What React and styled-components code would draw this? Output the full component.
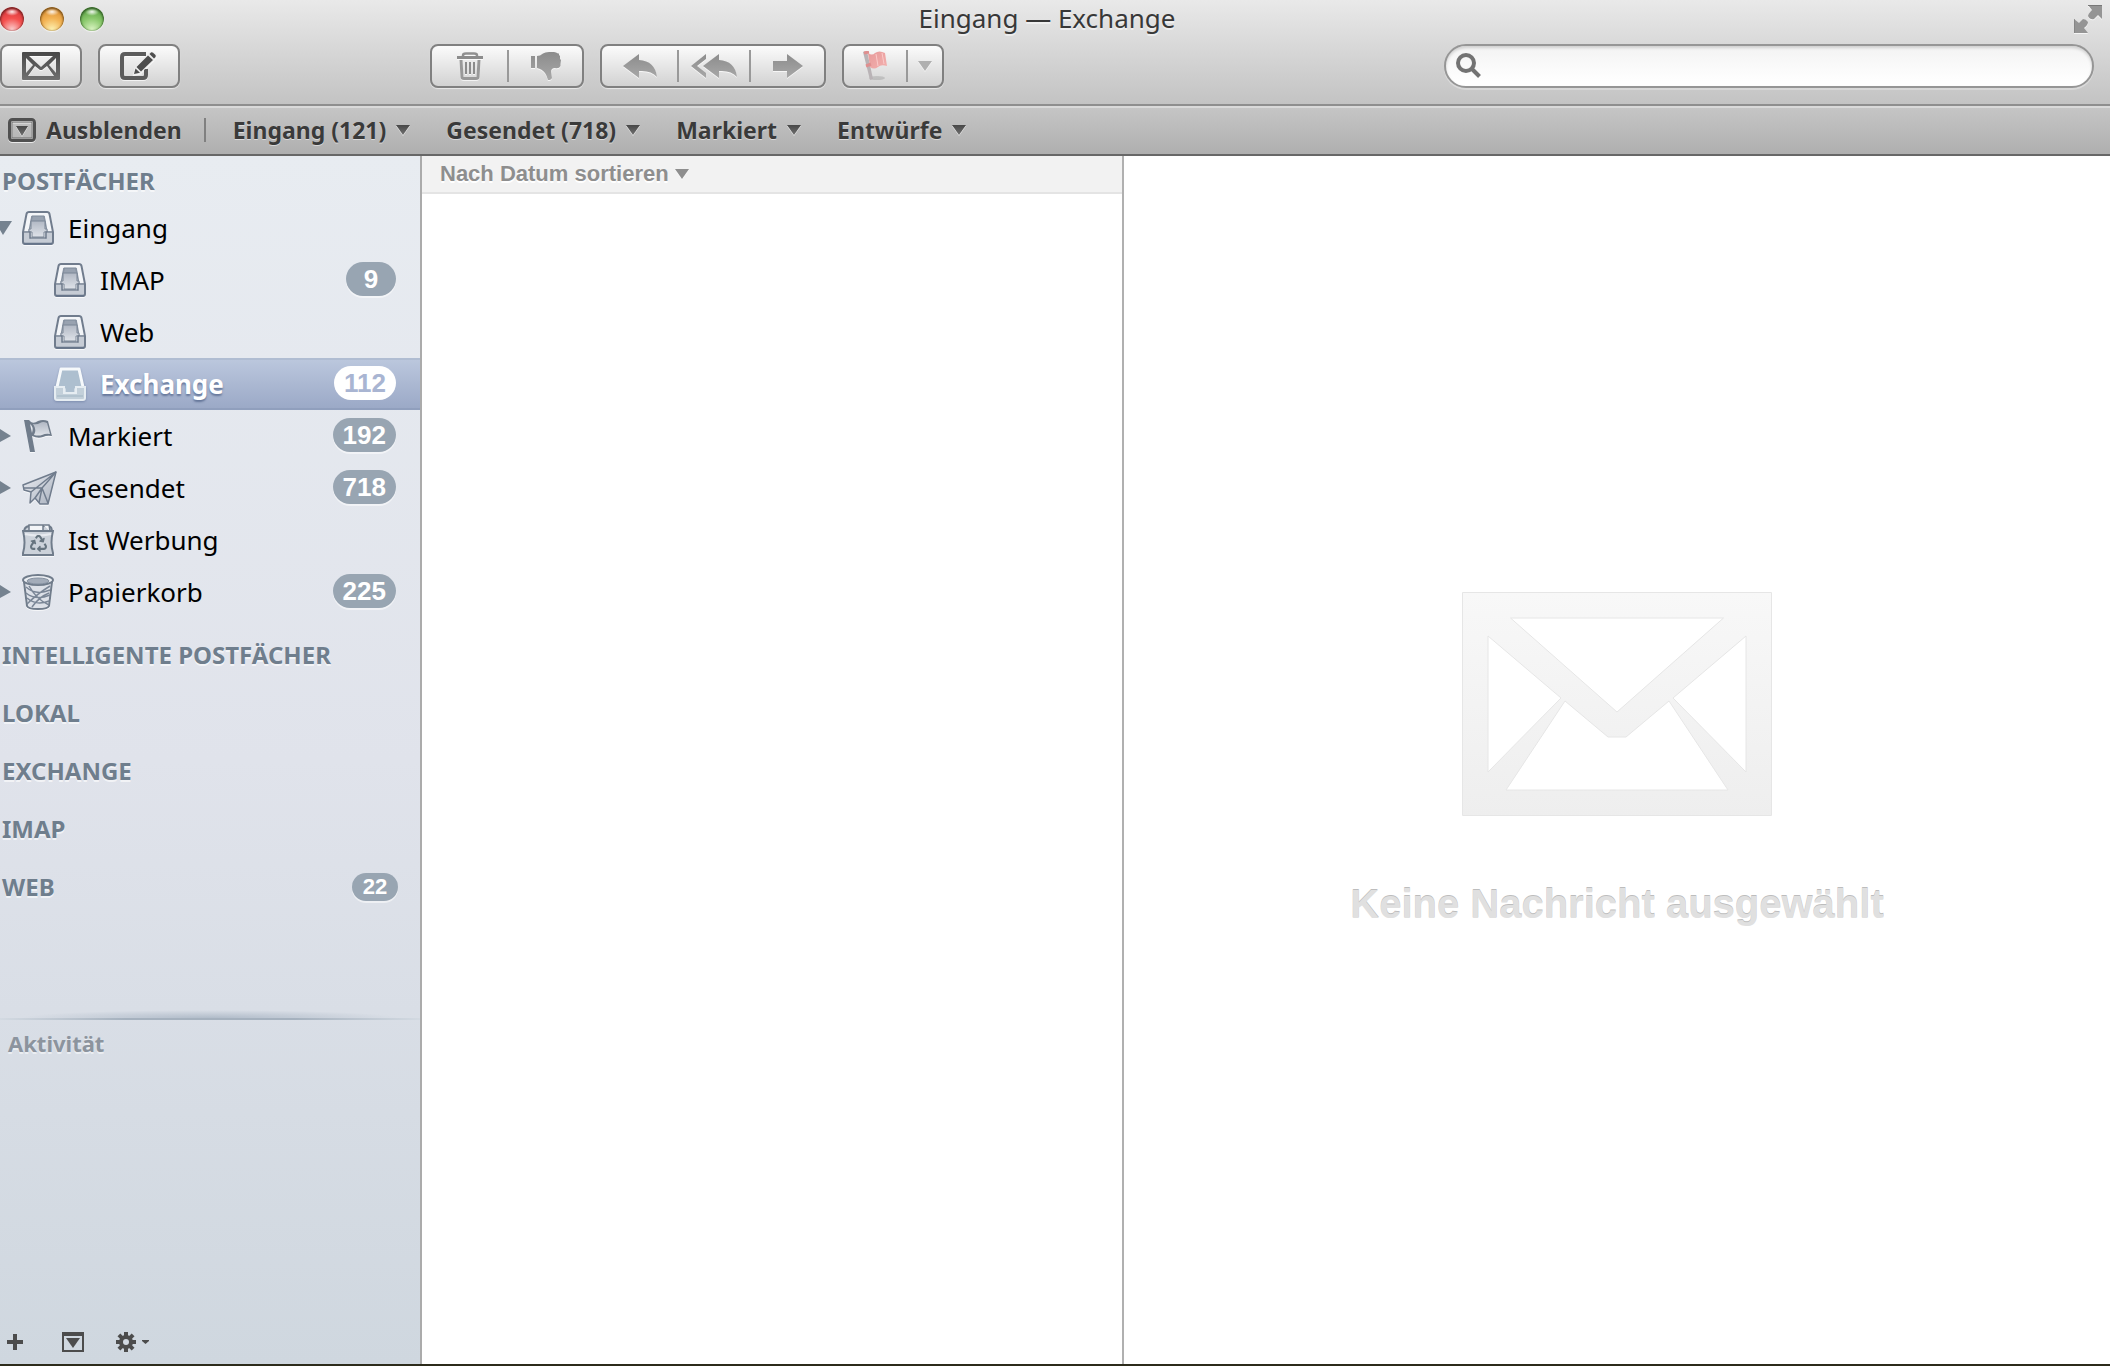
import React, { useState } from "react";
import styled, { createGlobalStyle } from "styled-components";
import { FaRecycle } from "react-icons/fa";

const mailboxes = [
  { id: "inbox", label: "Eingang", icon: "tray", arrow: "down" },
  { id: "inbox-imap", label: "IMAP", icon: "tray", count: 9, child: true },
  { id: "inbox-web", label: "Web", icon: "tray", child: true },
  { id: "inbox-exchange", label: "Exchange", icon: "tray", count: 112, child: true },
  { id: "flagged", label: "Markiert", icon: "flag", count: 192, arrow: "right" },
  { id: "sent", label: "Gesendet", icon: "plane", count: 718, arrow: "right" },
  { id: "junk", label: "Ist Werbung", icon: "junk" },
  { id: "trash", label: "Papierkorb", icon: "bin", count: 225, arrow: "right" },
];

const accounts = [
  { label: "INTELLIGENTE POSTFÄCHER" },
  { label: "LOKAL" },
  { label: "EXCHANGE" },
  { label: "IMAP" },
  { label: "WEB", count: 22 },
];

const favorites = ["Eingang (121)", "Gesendet (718)", "Markiert", "Entwürfe"];

// gradients shared by all icons
const Gradients = () => (
  <HiddenSvg aria-hidden="true">
    <defs>
      <linearGradient id="dark" x1="0" y1="0" x2="0" y2="1">
        <stop offset="0" stopColor="#484848" />
        <stop offset="1" stopColor="#707070" />
      </linearGradient>
      <linearGradient id="dim" x1="0" y1="0" x2="0" y2="1">
        <stop offset="0" stopColor="#8c8c8c" />
        <stop offset="1" stopColor="#a8a8a8" />
      </linearGradient>
      <linearGradient id="steel" x1="0" y1="0" x2="0" y2="1">
        <stop offset="0" stopColor="#b1b8c4" />
        <stop offset="1" stopColor="#dfe3e9" />
      </linearGradient>
      <linearGradient id="steelSide" x1="0" y1="0" x2="1" y2="1">
        <stop offset="0" stopColor="#eceef3" />
        <stop offset="1" stopColor="#a9b1be" />
      </linearGradient>
      <linearGradient id="pale" x1="0" y1="0" x2="0" y2="1">
        <stop offset="0" stopColor="#f8f8f8" />
        <stop offset="1" stopColor="#eeeeee" />
      </linearGradient>
      <linearGradient id="pink" x1="0" y1="0" x2="1" y2="1">
        <stop offset="0" stopColor="#e79a9a" />
        <stop offset="1" stopColor="#f3b0ae" />
      </linearGradient>
    </defs>
  </HiddenSvg>
);

const Triangle = ({ fill = "url(#dark)" }) => (
  <Engraved width="14" height="10" viewBox="0 0 14 10">
    <path d="M0 0H14L7 10Z" fill={fill} />
  </Engraved>
);

const EnvelopeIcon = () => (
  <Engraved width="38" height="28" viewBox="0 0 38 28">
    <path
      fill="url(#dark)"
      fillRule="evenodd"
      d="M1 0H37Q38 0 38 1V27Q38 28 37 28H1Q0 28 0 27V1Q0 0 1 0ZM7 4L19 15L31 4ZM4 6V21L11 13ZM34 6V21L27 13ZM13 14L6 24H32L25 14L20 18H18Z"
    />
  </Engraved>
);

const ComposeIcon = () => (
  <Engraved width="38" height="28" viewBox="0 0 38 28">
    <path d="M26 2H5Q2 2 2 5V23Q2 26 5 26H23Q26 26 26 23V17" fill="none" stroke="#5c5c5c" strokeWidth="4" />
    <path d="M14 22L15.500 16.500L20 20.700ZM16.500 15L28 3.500L33 8L21 19.500ZM29.500 2L31 .5Q32 0 33 .7L35.500 3Q36 4 35.500 5L34 6.500Z" fill="#4d4d4d" stroke="#ececec" strokeWidth="2" paintOrder="stroke" />
  </Engraved>
);

const TrashIcon = () => (
  <Engraved width="26" height="28" viewBox="0 0 26 28">
    <path d="M6 5V3.500Q6 1.500 9 1.500H17Q20 1.500 20 3.500V5" fill="none" stroke="#909090" strokeWidth="2.500" />
    <path d="M0 4H26V7H0Z" fill="#8c8c8c" />
    <path d="M4 8L5 25Q5 26.500 7 26.500H19Q21 26.500 21 25L22 8" fill="none" stroke="#999" strokeWidth="3" />
    <path d="M9 10V22M13 10V22M17 10V22" stroke="#8c8c8c" strokeWidth="2" />
  </Engraved>
);

const ThumbDownIcon = () => (
  <Engraved width="30" height="28" viewBox="0 0 30 28">
    <path d="M0 4H4V16H0ZM6 4Q9 4 12 1.500Q14 0 18 0H23Q25 .3 27 1.500H28V4L29 3V7L30 8L29.500 12L29.500 14Q28 17 24 16Q20 16 20 20L21 26Q20 28.500 17 28Q16 24 14 21Q11 17 6 16Z" fill="url(#dim)" />
  </Engraved>
);

const ReplyIcon = () => (
  <Engraved width="34" height="24" viewBox="0 0 34 24">
    <path d="M0 12L16 0V6Q32 7 34 23Q28 16 16 17V24Z" fill="url(#dim)" />
  </Engraved>
);

const ReplyAllIcon = () => (
  <Engraved width="46" height="24" viewBox="0 0 46 24">
    <path d="M15 0L0 12L15 24V19L6 12L15 5ZM12 12L28 0V6Q44 7 46 23Q40 16 28 17V24Z" fill="url(#dim)" />
  </Engraved>
);

const ForwardIcon = () => (
  <Engraved width="30" height="24" viewBox="0 0 30 24">
    <path d="M0 7H14V0L30 12L14 24V17H0Z" fill="url(#dim)" />
  </Engraved>
);

const RedFlagIcon = () => (
  <svg width="24" height="30" viewBox="0 0 24 30">
    <ellipse cx="14" cy="27" rx="8" ry="2" fill="#000" opacity=".12" />
    <path d="M0 1L4 0L10 28L7 29Z" fill="#b9b3b6" />
    <path d="M5 2Q9 5 12 2Q16 -1 22 2L24 15Q18 13 15 16Q11 19 7 16Z" fill="url(#pink)" />
    <path d="M1 2L6 1M3 15L8 13" stroke="#df8f8f" strokeWidth="3" />
    <path d="M13 3L15 15M19 2L21 13" stroke="#fbcaca" strokeWidth="1" />
  </svg>
);

const HideIcon = () => (
  <Engraved width="28" height="24" viewBox="0 0 28 24">
    <rect x="1.500" y="1.500" width="25" height="21" rx="3" fill="none" stroke="#505050" strokeWidth="3" />
    <rect x="4" y="4" width="20" height="16" fill="none" stroke="#6b6b6b" strokeWidth="1" />
    <path d="M8 8H20L14 18Z" fill="url(#dark)" />
  </Engraved>
);

const FullscreenIcon = () => (
  <Engraved width="28" height="28" viewBox="0 0 28 28">
    <path d="M14 0H28V14L24 10L20 14Q16 15 14 11Q14 9 18 5ZM0 14L5 18L9 14Q12 14 14 17Q14 20 10 23L14 28H0Z" fill="#959595" />
    <path d="M14 .5H28M0 14V28" stroke="#787878" strokeWidth="1" />
  </Engraved>
);

const SearchIcon = () => (
  <svg width="26" height="26" viewBox="0 0 26 26">
    <circle cx="10" cy="10" r="8" fill="none" stroke="#737373" strokeWidth="4" />
    <path d="M15 15L23.500 23.500" stroke="#737373" strokeWidth="4" />
  </svg>
);

const TrayIcon = ({ selected }) => {
  if (selected) {
    return (
      <Engraved width="32" height="34" viewBox="0 0 32 34" $soft>
        <path d="M7 2H25L29 20V22H22V27H10V22H3V20Z" fill="#adbfcf" stroke="#f6f9fb" strokeWidth="3" strokeLinejoin="round" />
        <path d="M1 20H10V26H22V20H31V31Q31 33 29 33H3Q1 33 1 31Z" fill="#c3d0da" stroke="#e6edf2" strokeWidth="2" />
        <path d="M3 29H29" stroke="#b2c3cf" strokeWidth="2" />
      </Engraved>
    );
  }
  return (
    <Engraved width="32" height="34" viewBox="0 0 32 34">
      <path d="M7 1H25Q27 1 27.500 3L31 21V31Q31 33 29 33H3Q1 33 1 31V21L4.500 3Q5 1 7 1Z" fill="#f3f5f8" stroke="#707c8d" strokeWidth="2" />
      <path d="M2 22H9V28H23V22H30V31H2Z" fill="#c6ccd5" />
      <path d="M10 5H22L23 11H9Z" fill="#98a2b0" stroke="#7d8999" strokeWidth="1" />
      <path d="M10 5L7 21M22 5L25 21" stroke="#8893a2" strokeWidth="1.500" />
      <path d="M9 10H23V18H25V21H22V26H10V21H7V18H9Z" fill="url(#steel)" stroke="#7a8696" strokeWidth="1" />
      <path d="M1 21H8V27H24V21H31" fill="none" stroke="#707c8d" strokeWidth="1.500" />
      <path d="M2 32.500H30" stroke="#66758a" strokeWidth="2" />
    </Engraved>
  );
};

const FlagIcon = () => (
  <Engraved width="32" height="34" viewBox="0 0 32 34">
    <path d="M2 1H7L9 3Q12 5 16 2Q21 0 26 2L30 17Q25 16 21 18Q16 20 10 17L13 33H8Z" fill="#707c8b" />
    <path d="M11 5Q15 6 18 4Q21 2 25 4L28 15Q24 14 20 16Q17 17 12 16Q15 11 11 5Z" fill="url(#steel)" />
    <path d="M8 5Q12 8 10 14Z" fill="#e6e9ef" />
  </Engraved>
);

const PlaneIcon = () => (
  <Engraved width="36" height="34" viewBox="0 0 36 34">
    <path d="M34 1L1 14L2 19L9 21L8 32L13 27L18 33H26Z" fill="url(#steelSide)" stroke="#707c8d" strokeWidth="1.500" strokeLinejoin="round" />
    <path d="M34 1L9 21M34 1L20 17L17 32M2 17L20 17L26 32M20 17L13 27" fill="none" stroke="#707c8d" strokeWidth="1.500" />
  </Engraved>
);

const JunkIcon = () => (
  <Engraved width="32" height="34" viewBox="0 0 32 34">
    <path d="M2 9Q2 4 7 3H27Q30 4 30 9Z" fill="#c9cfd8" stroke="#707c8b" strokeWidth="2" />
    <path d="M7 8V2H21V8M21 2H27L28 8" fill="#f3f5f8" stroke="#707c8b" strokeWidth="1.500" />
    <path d="M1 8H31Q28 20 31 30V32H1V30Q4 20 1 8Z" fill="#ccd2da" stroke="#707c8b" strokeWidth="2" />
    <path d="M3 11Q16 14 29 11" fill="none" stroke="#e8ebf0" strokeWidth="2" />
    <FaRecycle x="8" y="12" size="17" color="#66747f" />
  </Engraved>
);

const BinIcon = () => (
  <Engraved width="32" height="36" viewBox="0 0 32 36">
    <path d="M2 8L5 32Q6 35 16 35Q26 35 27 32L30 8Z" fill="#dde1e8" stroke="#707c8b" strokeWidth="2" />
    <path d="M4 13Q14 22 28 16M4 19Q14 27 28 21M5 24Q14 32 27 27M28 12Q15 20 5 30M27 19Q17 23 10 33M7 12Q15 26 27 31" fill="none" stroke="#7a8696" strokeWidth="1.500" />
    <ellipse cx="16" cy="6" rx="15" ry="5" fill="#eceff3" stroke="#707c8b" strokeWidth="2" />
    <ellipse cx="16" cy="7" rx="11" ry="3" fill="#a3acb9" stroke="#8490a0" strokeWidth="1" />
  </Engraved>
);

const GearIcon = () => (
  <svg width="34" height="20" viewBox="0 0 34 20">
    {[0, 45, 90, 135].map((deg) => (
      <rect key={deg} x="8" y="0" width="4" height="20" fill="#4c4c4c" transform={`rotate(${deg} 10 10)`} />
    ))}
    <circle cx="10" cy="10" r="7" fill="#4c4c4c" />
    <circle cx="10" cy="10" r="3" fill="#d2d9e1" />
    <path d="M26 8H33V9L29.500 12L26 9Z" fill="#4c4c4c" />
  </svg>
);

const mailboxIcons = {
  tray: TrayIcon,
  flag: FlagIcon,
  plane: PlaneIcon,
  junk: JunkIcon,
  bin: BinIcon,
};

const Disclosure = ({ arrow }) => (
  <svg width="12" height="16" viewBox="0 0 12 16">
    {arrow === "down" && <path d="M0 1H12L3 15L0 10Z" fill="#75828f" />}
    {arrow === "right" && <path d="M0 1L11 8L0 14Z" fill="#75828f" />}
  </svg>
);

const Header = () => (
  <Toolbar>
    <TitleRow>
      <Lights>
        <Light aria-label="Schließen" $rim="#7c2626" $edge="#d8383c" $mid="#f4514f" $glow="#fbd0d0" />
        <Light aria-label="Minimieren" $rim="#7f561e" $edge="#dc9136" $mid="#f3b354" $glow="#fdf3b4" />
        <Light aria-label="Zoomen" $rim="#37622a" $edge="#5fa548" $mid="#8bc96d" $glow="#dcf5c4" />
      </Lights>
      <Title>Eingang — Exchange</Title>
      <PlainButton aria-label="Vollbild">
        <FullscreenIcon />
      </PlainButton>
    </TitleRow>
    <ToolRow>
      <Segments>
        <Segment $width={78} aria-label="E-Mails empfangen"><EnvelopeIcon /></Segment>
      </Segments>
      <Segments>
        <Segment $width={78} aria-label="Neue E-Mail"><ComposeIcon /></Segment>
      </Segments>
      <Spacer />
      <Segments>
        <Segment $width={75} aria-label="Löschen"><TrashIcon /></Segment>
        <Segment $width={75} aria-label="Ist Werbung"><ThumbDownIcon /></Segment>
      </Segments>
      <Segments>
        <Segment $width={75} aria-label="Antworten"><ReplyIcon /></Segment>
        <Segment $width={72} aria-label="Allen antworten"><ReplyAllIcon /></Segment>
        <Segment $width={75} aria-label="Weiterleiten"><ForwardIcon /></Segment>
      </Segments>
      <Segments>
        <Segment $width={62} aria-label="Markieren"><RedFlagIcon /></Segment>
        <Segment $width={36} aria-label="Markierung wählen"><Triangle fill="#b0b0b0" /></Segment>
      </Segments>
      <SearchField>
        <SearchIcon />
        <input type="search" aria-label="Suchen" />
      </SearchField>
    </ToolRow>
  </Toolbar>
);

const Sidebar = () => {
  const [selected, setSelected] = useState("inbox-exchange");

  return (
    <SidebarPane>
      <MailboxNav>
        <section>
          <Heading>POSTFÄCHER</Heading>
          <List>
            {mailboxes.map((box) => {
              const BoxIcon = mailboxIcons[box.icon];
              const isSelected = box.id === selected;
              return (
                <li key={box.id}>
                  <Row $child={box.child} $selected={isSelected} onClick={() => setSelected(box.id)}>
                    <Disclosure arrow={box.arrow} />
                    <IconSlot><BoxIcon selected={isSelected} /></IconSlot>
                    <RowLabel>{box.label}</RowLabel>
                    {box.count && <Badge $selected={isSelected}>{box.count}</Badge>}
                  </Row>
                </li>
              );
            })}
          </List>
        </section>
        {accounts.map((account) => (
          <Heading key={account.label}>
            {account.label}
            {account.count && <Badge $small>{account.count}</Badge>}
          </Heading>
        ))}
      </MailboxNav>
      <Activity>
        <h2>Aktivität</h2>
      </Activity>
      <SidebarFooter>
        <PlainButton aria-label="Hinzufügen">
          <svg width="16" height="16" viewBox="0 0 16 16"><path d="M8 0V16M0 8H16" stroke="#4c4c4c" strokeWidth="4" /></svg>
        </PlainButton>
        <PlainButton aria-label="Aktivität ausblenden">
          <svg width="22" height="20" viewBox="0 0 22 20">
            <path d="M0 0H22V20H0ZM2 4V18H20V4Z" fill="#4c4c4c" fillRule="evenodd" />
            <path d="M4 6H18L11 16Z" fill="#4c4c4c" />
          </svg>
        </PlainButton>
        <PlainButton aria-label="Aktionen"><GearIcon /></PlainButton>
      </SidebarFooter>
    </SidebarPane>
  );
};

const App = () => {
  return (
    <>
      <GlobalStyle />
      <Gradients />
      <Window>
        <Header />
        <FavoritesBar>
          <FavoriteButton><HideIcon />Ausblenden</FavoriteButton>
          <FavoriteDivider />
          <Favorites>
            {favorites.map((name) => (
              <FavoriteButton key={name}>{name}<Triangle /></FavoriteButton>
            ))}
          </Favorites>
        </FavoritesBar>
        <Body>
          <Sidebar />
          <MessageList>
            <SortBar>
              <SortButton>Nach Datum sortieren<Triangle fill="#8e8e8e" /></SortButton>
            </SortBar>
          </MessageList>
          <Viewer>
            <svg width="310" height="224" viewBox="0 0 310 224">
              <path
                fill="url(#pale)"
                fillRule="evenodd"
                stroke="#e6e6e6"
                strokeWidth="1"
                d="M.5 .5H309.500V223.500H.5ZM48.500 26H261.500L155 120ZM26 44L99 106L26 180ZM284 44L211 106L284 180ZM103 109L146 145H164L207 109L266 198H44Z"
              />
            </svg>
            <EmptyText>Keine Nachricht ausgewählt</EmptyText>
          </Viewer>
        </Body>
      </Window>
    </>
  );
};

export default App;

const GlobalStyle = createGlobalStyle`
    * {
        box-sizing: border-box;
    }
    body {
        margin: 0;
        overflow: hidden;
        font-family: "Noto Sans", sans-serif;
    }
    button {
        padding: 0;
        border: none;
        background: none;
        color: inherit;
        font: inherit;
    }
    svg {
        display: block;
        flex: none;
    }
`

const HiddenSvg = styled.svg`
    position: absolute;
    width: 0;
    height: 0;
`

const Engraved = styled.svg`
    filter: drop-shadow(0 ${(p) => (p.$soft ? "1px 1px rgba(70, 90, 130, 0.4)" : "1px 0 rgba(255, 255, 255, 0.7)")});
`

const Window = styled.div`
    display: flex;
    flex-direction: column;
    height: 100vh;
    border-bottom: 2px solid #2c2b1b;
    background-color: white;
`

const Toolbar = styled.header`
    flex: none;
    height: 106px;
    border-bottom: 2px solid #8e8e8e;
    background: linear-gradient(#e9e9e9, #c3c3c3);
`

const TitleRow = styled.div`
    display: grid;
    grid-template-columns: 1fr auto 1fr;
    align-items: center;
    height: 38px;
    padding-right: 8px;

    & > :last-child {
        justify-self: end;
    }
`

const Lights = styled.div`
    display: flex;
    gap: 16px;
`

const Light = styled.button`
    width: 24px;
    height: 24px;
    border-radius: 50%;
    background:
        radial-gradient(ellipse 7px 4px at 50% 20%, rgba(255, 255, 255, 0.9), transparent),
        radial-gradient(circle at 50% 95%, ${(p) => p.$glow}, ${(p) => p.$mid} 45%, ${(p) => p.$edge} 80%);
    box-shadow: inset 0 1px 2px 1px ${(p) => p.$rim}, 0 1px 1px rgba(255, 255, 255, 0.7);
`

const Title = styled.h1`
    margin: 0;
    padding: 0 8px 2px 0;
    font-size: 26px;
    font-weight: 400;
    line-height: 36px;
    color: #383838;
    text-shadow: 0 2px 0 rgba(255, 255, 255, 0.5);
`

const PlainButton = styled.button`
    display: flex;
`

const ToolRow = styled.div`
    display: flex;
    gap: 16px;
    padding: 6px 16px 0 0;
`

const Spacer = styled.div`
    width: 218px;
`

const Segments = styled.div`
    display: flex;
    align-items: center;
    height: 44px;
    border: 2px solid #808080;
    border-radius: 8px;
    background: linear-gradient(#fbfbfb, #d2d2d2);
    box-shadow: 0 1px 1px rgba(255, 255, 255, 0.6);

    & > button + button {
        border-left: 2px solid #999;
    }
`

const Segment = styled.button`
    display: flex;
    justify-content: center;
    align-items: center;
    width: ${(p) => p.$width}px;
    height: 32px;
`

const SearchField = styled.label`
    display: flex;
    align-items: center;
    flex: 0 1 650px;
    gap: 8px;
    height: 44px;
    margin-left: auto;
    padding: 0 10px;
    border: 2px solid #969696;
    border-radius: 22px;
    background: linear-gradient(#f3f3f3, #ffffff 90%);
    box-shadow: inset 0 2px 3px rgba(0, 0, 0, 0.15), 0 2px 0 rgba(255, 255, 255, 0.3);

    input {
        flex: 1;
        min-width: 0;
        border: none;
        outline: none;
        background: none;
        font-size: 24px;
    }
`

const FavoritesBar = styled.nav`
    display: flex;
    align-items: center;
    flex: none;
    height: 50px;
    padding: 0 8px 3px;
    border-top: 2px solid #d9d9d9;
    border-bottom: 2px solid #676767;
    background: linear-gradient(#c5c5c5, #afafaf);
`

const FavoriteButton = styled.button`
    display: flex;
    align-items: center;
    gap: 10px;
    font-size: 23px;
    font-weight: 700;
    line-height: 30px;
    color: #3a3a3a;
    text-shadow: 0 1px 0 rgba(255, 255, 255, 0.5);
`

const FavoriteDivider = styled.span`
    width: 2px;
    height: 24px;
    margin: 0 27px 0 22px;
    background-color: #808080;
`

const Favorites = styled.div`
    display: flex;
    gap: 36px;
`

const Body = styled.main`
    display: flex;
    flex: 1;
    min-height: 0;
`

const SidebarPane = styled.aside`
    display: flex;
    flex-direction: column;
    flex: none;
    width: 422px;
    border-right: 2px solid #ababab;
    background: linear-gradient(#e8ecf1, #e0e3eb 50%, #cfd7df);
`

const MailboxNav = styled.nav`
    display: flex;
    flex-direction: column;
    gap: 18px;
    flex: 1;
    min-height: 0;
    padding-top: 6px;
    overflow: hidden;
    background: radial-gradient(ellipse 45% 8px at 50% 100%, rgba(150, 165, 182, 0.6), transparent);
`

const Heading = styled.h2`
    display: flex;
    justify-content: space-between;
    align-items: center;
    height: 40px;
    margin: 0;
    padding: 0 22px 3px 2px;
    font-size: 24px;
    font-weight: 700;
    line-height: 32px;
    color: #6f7e8d;
    text-shadow: 0 2px 0 rgba(255, 255, 255, 0.6);
`

const List = styled.ul`
    margin: 0;
    padding: 0;
    list-style: none;
`

const Row = styled.button`
    display: flex;
    align-items: center;
    width: 100%;
    height: 52px;
    padding: 0 24px 0 ${(p) => (p.$child ? 32 : 0)}px;
    font-size: 26px;
    font-weight: ${(p) => (p.$selected ? 700 : 400)};
    color: ${(p) => (p.$selected ? "white" : "black")};
    text-align: left;
    text-shadow: ${(p) => (p.$selected ? "0 2px 2px rgba(60, 80, 120, 0.6)" : "none")};
    background: ${(p) => (p.$selected ? "linear-gradient(#bcc8de, #9aa8c6)" : "none")};
    box-shadow: ${(p) => (p.$selected ? "inset 0 2px 0 #b0bdd2, inset 0 -2px 0 #909fbd" : "none")};
`

const IconSlot = styled.span`
    width: 36px;
    margin: 0 10px;
`

const RowLabel = styled.span`
    flex: 1;
`

const Badge = styled.span`
    min-width: ${(p) => (p.$small ? 46 : 50)}px;
    margin-bottom: ${(p) => (p.$small ? 0 : 2)}px;
    padding: 0 10px;
    border-radius: 17px;
    font-family: "Liberation Sans", sans-serif;
    font-size: ${(p) => (p.$small ? 22 : 26)}px;
    font-weight: 700;
    line-height: ${(p) => (p.$small ? 28 : 34)}px;
    text-align: center;
    text-shadow: none;
    color: ${(p) => (p.$selected ? "#a9b5d2" : "white")};
    background-color: ${(p) => (p.$selected ? "white" : "#98a5b2")};
    box-shadow: ${(p) => (p.$selected ? "none" : "0 2px 0 rgba(255, 255, 255, 0.5)")};
`

const Activity = styled.section`
    height: 296px;
    padding: 8px;
    border-top: 2px solid;
    border-image: linear-gradient(90deg, #d3dae2, #a5b1be 30%, #a5b1be 70%, #d3dae2) 1;

    h2 {
        margin: 0;
        font-size: 22px;
        line-height: 30px;
        font-weight: 700;
        color: #8c949e;
        text-shadow: 0 2px 0 rgba(255, 255, 255, 0.5);
    }
`

const SidebarFooter = styled.footer`
    display: flex;
    align-items: center;
    height: 50px;
    padding: 6px 7px 0;
    gap: 32px;

    & > button:first-child {
        margin-right: 7px;
    }
`

const MessageList = styled.section`
    flex: 0 1 702px;
    border-right: 2px solid #b0b0b0;
`

const SortBar = styled.div`
    display: flex;
    align-items: center;
    height: 38px;
    padding-left: 18px;
    border-bottom: 2px solid #e4e4e4;
    background-color: #f2f2f2;
`

const SortButton = styled.button`
    display: flex;
    align-items: center;
    gap: 6px;
    font-family: "Liberation Sans", sans-serif;
    font-size: 22px;
    font-weight: 700;
    color: #8e8e8e;
    text-shadow: 0 2px 0 white;
`

const Viewer = styled.section`
    display: flex;
    flex-direction: column;
    justify-content: center;
    align-items: center;
    gap: 64px;
    flex: 1;
`

const EmptyText = styled.p`
    margin: 0;
    font-family: "Liberation Sans", sans-serif;
    font-size: 40px;
    font-weight: 700;
    line-height: 48px;
    color: #e0e0e0;
    text-shadow: 0 -1px 0 #bdbdbd;
`
